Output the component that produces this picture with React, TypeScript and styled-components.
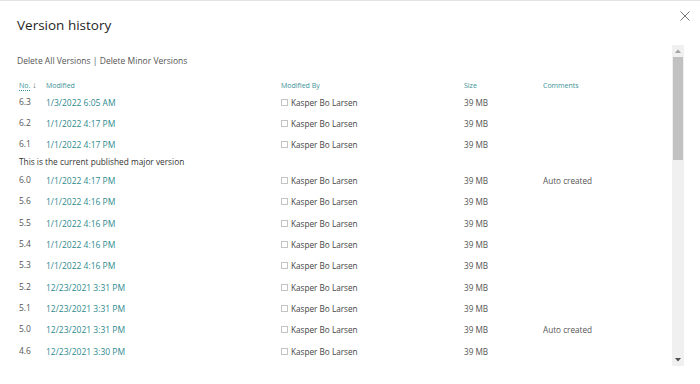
import React from "react";
import styled, { createGlobalStyle } from "styled-components";

const Global = createGlobalStyle`
  html, body { margin: 0; padding: 0; background: #ffffff; }
  body { font-family: "Open Sans", "Noto Sans", Arial, sans-serif; color: #333; }
`;

const Dialog = styled.div`
  position: relative;
  width: 700px;
  height: 384px;
  box-sizing: border-box;
  border-top: 1px solid #e3e3e3;
  background: #fff;
  display: flex;
  flex-direction: column;
  overflow: hidden;
`;

const Title = styled.h1`
  margin: 0;
  padding: 10px 0 0 17px;
  height: 35px;
  box-sizing: border-box;
  font-size: 13.5px;
  line-height: 28px;
  font-weight: 400;
  color: #1f1f1f;
`;

const CloseButton = styled.button`
  position: absolute;
  top: 8px;
  right: 8px;
  width: 14px;
  height: 14px;
  padding: 0;
  border: 0;
  background: transparent;
  display: flex;
  align-items: center;
  justify-content: center;
  cursor: pointer;
`;

const Body = styled.div`
  display: flex;
  flex-direction: row;
  height: 321px;
  margin-top: 9px;
`;

const Content = styled.div`
  flex: 1;
  overflow: hidden;
  padding-top: 8px;
  box-sizing: border-box;
`;

const Commands = styled.div`
  padding-left: 17px;
  font-size: 8.5px;
  line-height: 16px;
  color: #555;
  height: 16px;
`;

const Table = styled.div`
  margin-top: 10px;
  padding-left: 19px;
  display: flex;
  flex-direction: column;
`;

const Row = styled.div<{ $header?: boolean }>`
  display: grid;
  grid-template-columns: 27px 235px 183px 79px 1fr;
  align-items: center;
  height: ${(p) => (p.$header ? "13px" : "21.33px")};
  margin-bottom: ${(p) => (p.$header ? "-0.5px" : "0")};
`;

const HeadCell = styled.div`
  font-size: 7px;
  line-height: 12px;
  color: #3a9296;
  display: flex;
  align-items: center;
  white-space: nowrap;
`;

const NoLabel = styled.span`
  text-decoration: underline;
  text-decoration-style: dotted;
  text-underline-offset: 2px;
`;

const SortArrow = styled.span`
  color: #555;
  font-size: 8px;
  margin-left: 2px;
  position: relative;
  top: -1px;
`;

const NumCell = styled.div`
  font-size: 8.5px;
  color: #555;
  white-space: nowrap;
  position: relative;
  top: -1px;
`;

const DateCell = styled.div`
  font-size: 8.5px;
  color: #2f8a8e;
  white-space: nowrap;
`;

const PersonCell = styled.div`
  display: flex;
  align-items: center;
  font-size: 8.2px;
  color: #444;
  white-space: nowrap;
`;

const Check = styled.span`
  width: 5px;
  height: 5px;
  border: 1px solid #c4c4c4;
  margin-right: 3px;
  flex: none;
`;

const TextCell = styled.div`
  font-size: 8.2px;
  color: #555;
  white-space: nowrap;
`;

const Note = styled.div`
  height: 14.5px;
  line-height: 14.5px;
  font-size: 8.3px;
  color: #333;
`;

const ScrollTrack = styled.div`
  width: 12px;
  margin-right: 16px;
  background: #f0f0f0;
  display: flex;
  flex-direction: column;
`;

const ScrollBtn = styled.div`
  height: 12px;
  display: flex;
  align-items: center;
  justify-content: center;
  flex: none;
`;

const Thumb = styled.div`
  height: 103px;
  margin: 0 1px;
  background: #c1c1c1;
  flex: none;
`;

const Spacer = styled.div`
  flex: 1;
`;

type V = { no: string; date: string; size: string; comment?: string; note?: boolean };

const versions: V[] = [
  { no: "6.3", date: "1/3/2022 6:05 AM", size: "39 MB" },
  { no: "6.2", date: "1/1/2022 4:17 PM", size: "39 MB" },
  { no: "6.1", date: "1/1/2022 4:17 PM", size: "39 MB" },
  { no: "6.0", date: "1/1/2022 4:17 PM", size: "39 MB", comment: "Auto created", note: true },
  { no: "5.6", date: "1/1/2022 4:16 PM", size: "39 MB" },
  { no: "5.5", date: "1/1/2022 4:16 PM", size: "39 MB" },
  { no: "5.4", date: "1/1/2022 4:16 PM", size: "39 MB" },
  { no: "5.3", date: "1/1/2022 4:16 PM", size: "39 MB" },
  { no: "5.2", date: "12/23/2021 3:31 PM", size: "39 MB" },
  { no: "5.1", date: "12/23/2021 3:31 PM", size: "39 MB" },
  { no: "5.0", date: "12/23/2021 3:31 PM", size: "39 MB", comment: "Auto created" },
  { no: "4.6", date: "12/23/2021 3:30 PM", size: "39 MB" },
];

export default function App() {
  return (
    <>
      <Global />
      <Dialog>
        <Title>Version history</Title>
        <CloseButton aria-label="Close">
          <svg width="10" height="10" viewBox="0 0 10 10">
            <path d="M0.5 0.5 L9.5 9.5 M9.5 0.5 L0.5 9.5" stroke="#777" strokeWidth="1" fill="none" />
          </svg>
        </CloseButton>
        <Body>
          <Content>
            <Commands>Delete All Versions | Delete Minor Versions</Commands>
            <Table>
              <Row $header>
                <HeadCell>
                  <NoLabel>No.</NoLabel>
                  <SortArrow>↓</SortArrow>
                </HeadCell>
                <HeadCell>Modified</HeadCell>
                <HeadCell>Modified By</HeadCell>
                <HeadCell>Size</HeadCell>
                <HeadCell>Comments</HeadCell>
              </Row>
              {versions.map((v) => (
                <React.Fragment key={v.no}>
                  {v.note && <Note>This is the current published major version</Note>}
                  <Row>
                    <NumCell>{v.no}</NumCell>
                    <DateCell>{v.date}</DateCell>
                    <PersonCell>
                      <Check />
                      Kasper Bo Larsen
                    </PersonCell>
                    <TextCell>{v.size}</TextCell>
                    <TextCell>{v.comment ?? ""}</TextCell>
                  </Row>
                </React.Fragment>
              ))}
            </Table>
          </Content>
          <ScrollTrack>
            <ScrollBtn>
              <svg width="6" height="4" viewBox="0 0 6 4">
                <path d="M0 4 L3 0.5 L6 4 Z" fill="#a3a3a3" />
              </svg>
            </ScrollBtn>
            <Thumb />
            <Spacer />
            <ScrollBtn>
              <svg width="6" height="4" viewBox="0 0 6 4">
                <path d="M0 0 L3 3.5 L6 0 Z" fill="#505050" />
              </svg>
            </ScrollBtn>
          </ScrollTrack>
        </Body>
      </Dialog>
    </>
  );
}
